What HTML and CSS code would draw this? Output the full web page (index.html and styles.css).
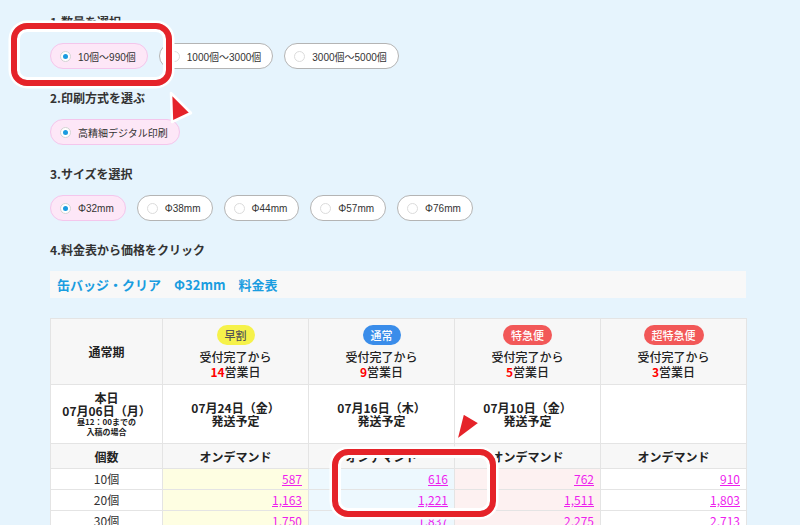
FILE: index.html
```html
<!DOCTYPE html>
<html lang="ja">
<head>
<meta charset="utf-8">
<title>缶バッジ・クリア 料金表</title>
<link rel="stylesheet" href="styles.css">
</head>
<body>
<div class="page">
  <h2 class="step">1.数量を選択</h2>
  <div class="pills">
    <span class="pill on"><i class="radio"></i>10個〜990個</span>
    <span class="pill"><i class="radio"></i>1000個〜3000個</span>
    <span class="pill"><i class="radio"></i>3000個〜5000個</span>
  </div>

  <h2 class="step">2.印刷方式を選ぶ</h2>
  <div class="pills">
    <span class="pill on"><i class="radio"></i>高精細デジタル印刷</span>
  </div>

  <h2 class="step">3.サイズを選択</h2>
  <div class="pills">
    <span class="pill on"><i class="radio"></i>Φ32mm</span>
    <span class="pill"><i class="radio"></i>Φ38mm</span>
    <span class="pill"><i class="radio"></i>Φ44mm</span>
    <span class="pill"><i class="radio"></i>Φ57mm</span>
    <span class="pill"><i class="radio"></i>Φ76mm</span>
  </div>

  <h2 class="step">4.料金表から価格をクリック</h2>
  <div class="table-title">缶バッジ・クリア　Φ32mm　料金表</div>

  <table class="price">
    <colgroup>
      <col class="c-lbl"><col class="c-val"><col class="c-val"><col class="c-val"><col class="c-val">
    </colgroup>
    <tr class="r-speed">
      <th class="lbl">通常期</th>
      <th><span class="badge early">早割</span><span class="line">受付完了から</span><span class="line"><b class="red">14</b>営業日</span></th>
      <th><span class="badge normal">通常</span><span class="line">受付完了から</span><span class="line"><b class="red">9</b>営業日</span></th>
      <th><span class="badge rush">特急便</span><span class="line">受付完了から</span><span class="line"><b class="red">5</b>営業日</span></th>
      <th><span class="badge rush">超特急便</span><span class="line">受付完了から</span><span class="line"><b class="red">3</b>営業日</span></th>
    </tr>
    <tr class="r-date">
      <td class="today"><span class="line">本日</span><span class="line">07月06日（月）</span><span class="small">昼12：00までの</span><span class="small">入稿の場合</span></td>
      <td class="ship"><span class="line">07月24日（金）</span><span class="line">発送予定</span></td>
      <td class="ship"><span class="line">07月16日（木）</span><span class="line">発送予定</span></td>
      <td class="ship"><span class="line">07月10日（金）</span><span class="line">発送予定</span></td>
      <td class="ship"></td>
    </tr>
    <tr class="r-kind">
      <th>個数</th>
      <th>オンデマンド</th>
      <th>オンデマンド</th>
      <th>オンデマンド</th>
      <th>オンデマンド</th>
    </tr>
    <tr class="r-data">
      <td class="qty">10個</td>
      <td class="v early"><a>587</a></td>
      <td class="v normal"><a>616</a></td>
      <td class="v rush"><a>762</a></td>
      <td class="v super"><a>910</a></td>
    </tr>
    <tr class="r-data">
      <td class="qty">20個</td>
      <td class="v early"><a>1,163</a></td>
      <td class="v normal"><a>1,221</a></td>
      <td class="v rush"><a>1,511</a></td>
      <td class="v super"><a>1,803</a></td>
    </tr>
    <tr class="r-data">
      <td class="qty">30個</td>
      <td class="v early"><a>1,750</a></td>
      <td class="v normal"><a>1,837</a></td>
      <td class="v rush"><a>2,275</a></td>
      <td class="v super"><a>2,713</a></td>
    </tr>
  </table>
</div>

<div class="mark mark-qty"></div>
<div class="mark mark-price"></div>
<svg class="arrow" width="800" height="525" viewBox="0 0 800 525" aria-hidden="true">
  <polygon points="171,93 191,113 172,122" fill="#e52329" stroke="#fff" stroke-width="2.5" stroke-linejoin="round"/>
  <polygon points="456,441 463,413 480,423" fill="#e52329" stroke="#fff" stroke-width="2.5" stroke-linejoin="round"/>
</svg>
</body>
</html>
```

FILE: styles.css
```css
html, body {
  margin: 0;
  padding: 0;
  overflow: hidden;
}
body {
  position: relative;
  width: 800px;
  height: 525px;
  background: #e6f4fd;
  font-family: "Noto Sans CJK JP", "Noto Sans", sans-serif;
  color: #333;
}
.page {
  padding: 12px 0 0 50px;
  width: 696px;
}
.step {
  margin: 0 0 11px;
  font-size: 12px;
  line-height: 20px;
  font-weight: bold;
  color: #333;
}
.pills {
  display: flex;
  gap: 11px;
  margin-bottom: 19px;
}
.pill {
  box-sizing: border-box;
  height: 26px;
  display: flex;
  align-items: center;
  gap: 7px;
  padding: 0 11px 0 9px;
  border: 1px solid #b4b4b4;
  border-radius: 13px;
  background: #fff;
  font-family: "Liberation Sans", "Noto Sans CJK JP", sans-serif;
  font-size: 10px;
  color: #333;
}
.pill.on {
  background: #fde7f7;
  border-color: #f4c6ec;
}
.radio {
  box-sizing: border-box;
  width: 11px;
  height: 11px;
  border-radius: 50%;
  border: 1px solid #dcdcdc;
  background: #fff;
  position: relative;
}
.pill.on .radio {
  border-color: #d4d4d4;
}
.pill.on .radio::after {
  content: "";
  position: absolute;
  left: 2px;
  top: 2px;
  width: 5px;
  height: 5px;
  border-radius: 50%;
  background: #1a9be0;
}
.table-title {
  height: 27px;
  line-height: 27px;
  padding-left: 7px;
  background: #f8f8f8;
  color: #1a9de0;
  font-size: 13px;
  font-weight: bold;
  margin-bottom: 20px;
}
.price {
  width: 695px;
  table-layout: fixed;
  border-collapse: collapse;
  border: 1px solid #d4d4d4;
  background: #fff;
  font-size: 12px;
  color: #222;
}
.c-lbl { width: 112px; }
.c-val { width: 146px; }
.price th, .price td {
  border: 1px solid #e4e4e4;
  padding: 0;
  text-align: center;
  vertical-align: middle;
}
.price th { font-weight: 500; }
.line { display: block; line-height: 15px; }
.r-speed th { background: #f7f7f7; height: 65px; }
.r-speed th.lbl { font-weight: bold; }
.badge {
  display: inline-block;
  height: 20px;
  line-height: 20px;
  padding: 0 8px;
  border-radius: 10px;
  font-size: 11px;
  margin-bottom: 4px;
  color: #fff;
}
.badge.early { background: #f6f24a; color: #555; }
.badge.normal { background: #3a8dea; }
.badge.rush { background: #f25858; }
.red { color: #f00; font-weight: bold; }
.r-date td { height: 58px; font-weight: bold; }
.r-date .line { line-height: 13px; }
.small {
  display: block;
  font-size: 8px;
  line-height: 10px;
}
.r-kind th { background: #f7f7f7; height: 24px; font-weight: bold; }
.r-data td { height: 20px; line-height: 20px; }
.r-data td.qty { color: #333; }
.v { text-align: right !important; padding-right: 6px !important; }
.v a { color: #ee1eee; text-decoration: underline; }
.v.early { background: #fefee2; }
.v.normal { background: #edf8fe; }
.v.rush { background: #fdf1f1; }
.v.super { background: #fff; }

.mark {
  position: absolute;
  box-sizing: border-box;
  border: 6px solid #e52329;
  border-radius: 16px;
  box-shadow: 0 0 0 2.5px #fff, inset 0 0 0 3px #fff;
}
.mark-qty { left: 11px; top: 23px; width: 161px; height: 63px; }
.mark-price { left: 332px; top: 449px; width: 164px; height: 68px; }
.arrow {
  position: absolute;
  left: 0;
  top: 0;
  pointer-events: none;
}
```
